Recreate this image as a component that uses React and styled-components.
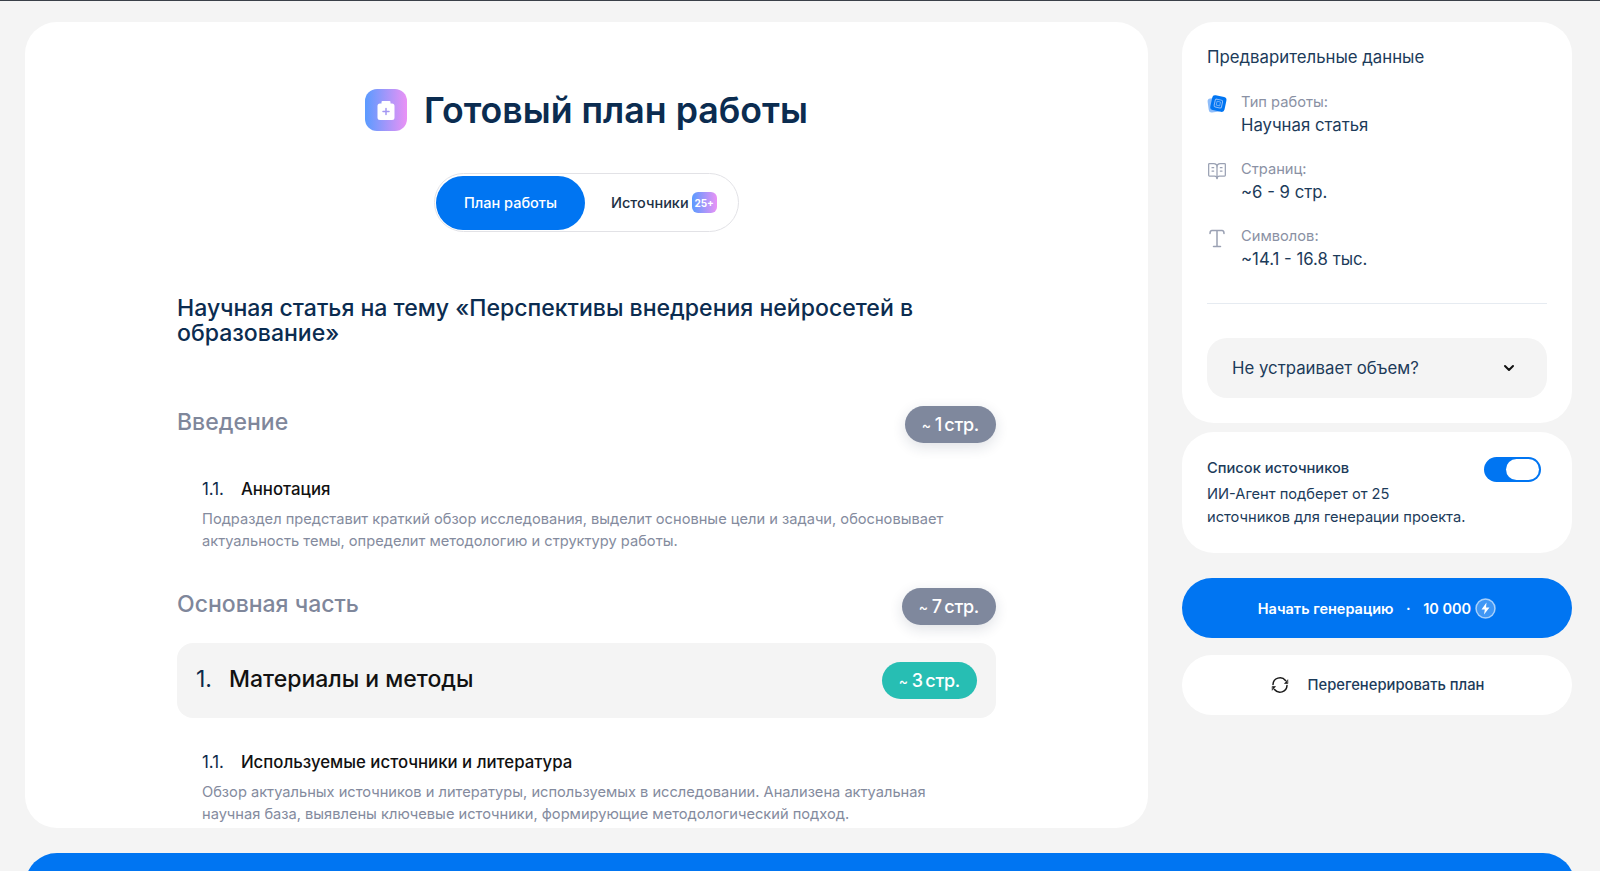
import styled, { createGlobalStyle } from "styled-components";
import { ChevronDown, BookOpenText } from "lucide-react";

const GlobalStyle = createGlobalStyle`
  html, body {
    margin: 0;
    height: 100%;
    overflow: hidden;
    background: #f4f4f4;
    font-family: "Inter", "Noto Sans", sans-serif;
  }
  * { box-sizing: border-box; }
`;

const Page = styled.div`
  height: 871px;
  border-top: 1px solid #3a4048;
  padding: 21px 25px 0;
  display: flex;
  flex-direction: column;
  overflow: hidden;
`;

const Columns = styled.div`
  display: grid;
  grid-template-columns: 1123px 390px;
  column-gap: 34px;
  align-items: start;
`;

const Main = styled.main`
  height: 806px;
  background: #fff;
  border-radius: 32px;
  overflow: hidden;
  padding: 67px 152px 0;
`;

const TitleRow = styled.div`
  display: flex;
  align-items: center;
  justify-content: center;
  gap: 17px;
`;

const TitleIcon = styled.div`
  width: 42px;
  height: 42px;
  border-radius: 12px;
  background: linear-gradient(90deg, #5a9bff, #ea92f5);
  display: flex;
  align-items: center;
  justify-content: center;
`;

const Title = styled.h1`
  margin: 0;
  font-size: 35.7px;
  line-height: 42px;
  font-weight: 600;
  color: #0b2c50;
`;

const Tabs = styled.div`
  width: 305px;
  height: 59px;
  margin: 42px auto 0;
  padding: 1px;
  border: 1px solid #e2e2e6;
  border-radius: 30px;
  display: flex;
  align-items: center;
`;

const ActiveTab = styled.div`
  width: 149px;
  height: 54px;
  border-radius: 27px;
  background: #0075f2;
  color: #fff;
  font-size: 14.5px;
  font-weight: 500;
  display: flex;
  align-items: center;
  justify-content: center;
`;

const Tab = styled.div`
  margin-left: 26px;
  color: #1d3145;
  font-size: 14.5px;
  font-weight: 500;
  display: flex;
  align-items: center;
  gap: 3px;
`;

const TabBadge = styled.span`
  width: 25px;
  height: 21px;
  border-radius: 6px;
  background: linear-gradient(90deg, #5a9bff, #ea92f5);
  color: #fff;
  font-size: 10px;
  font-weight: 700;
  display: flex;
  align-items: center;
  justify-content: center;
`;

const Heading = styled.h2`
  margin: 64px 0 0;
  font-size: 23.05px;
  line-height: 25px;
  font-weight: 500;
  color: #0b2c50;
`;

const SectionRow = styled.div`
  display: flex;
  align-items: center;
  justify-content: space-between;
  margin-top: ${(p) => p.$top}px;
`;

const SectionName = styled.div`
  font-size: 23px;
  line-height: 30px;
  padding-bottom: 5px;
  font-weight: 500;
  color: #7f879b;
`;

const Pill = styled.div`
  height: 37px;
  padding: 0 17px;
  border-radius: 19px;
  background: ${(p) => (p.$teal ? "#27beb3" : "#7f889d")};
  box-shadow: ${(p) => (p.$teal ? "none" : "0 4px 14px rgba(30, 40, 70, 0.14)")};
  color: #fff;
  font-size: 18px;
  font-weight: 500;
  letter-spacing: -0.3px;
  word-spacing: -2px;
  white-space: pre;
  display: flex;
  align-items: center;
`;

const Tilde = styled.span`
  font-size: 14px;
  margin-right: 4px;
`;

const SubItem = styled.div`
  padding-left: 25px;
  margin-top: ${(p) => p.$top}px;
`;

const SubTitle = styled.div`
  display: flex;
  gap: 17px;
  font-size: 16.8px;
  line-height: 24px;
  font-weight: 500;
  color: #111;
`;

const SubNum = styled.span`
  color: #0d2a4a;
  font-weight: 400;
`;

const SubText = styled.p`
  margin: 7px 0 0;
  font-size: 14.65px;
  line-height: 22px;
  color: #848b9e;
`;

const ChapterRow = styled.div`
  height: 75px;
  margin-top: 18px;
  padding: 0 19px;
  border-radius: 16px;
  background: #f4f4f4;
  display: flex;
  align-items: center;
  justify-content: space-between;
`;

const ChapterName = styled.div`
  display: flex;
  gap: 17px;
  padding-bottom: 4px;
  font-size: 23px;
  font-weight: 500;
  color: #111;
`;

const Side = styled.aside`
  display: flex;
  flex-direction: column;
`;

const Card = styled.section`
  background: #fff;
  border-radius: 32px;
  padding: ${(p) => p.$pad};
  margin-bottom: ${(p) => p.$mb}px;
`;

const CardTitle = styled.div`
  font-size: 16.8px;
  line-height: 24px;
  font-weight: 400;
  color: #1c3b5a;
  margin-bottom: 23px;
`;

const Info = styled.div`
  display: flex;
  gap: 14px;
  height: 67px;
`;

const InfoIcon = styled.div`
  width: 20px;
  height: 20px;
  margin-top: 2px;
  color: #9aa1b3;
  flex: none;
`;

const InfoLabel = styled.div`
  font-size: 14.7px;
  line-height: 20px;
  color: #8a91a4;
`;

const InfoValue = styled.div`
  font-size: 16.75px;
  line-height: 24px;
  margin-top: 1px;
  color: #1c3b5a;
`;

const Divider = styled.hr`
  margin: 10px 0 34px;
  border: 0;
  border-top: 1px solid #e6ebf1;
`;

const Select = styled.div`
  height: 60px;
  padding: 0 25px;
  border-radius: 20px;
  background: #f4f4f4;
  display: flex;
  align-items: center;
  justify-content: space-between;
  font-size: 16.8px;
  color: #1c3b5a;
`;

const SelectArrow = styled(ChevronDown)`
  margin-right: 5px;
`;

const ToggleHead = styled.div`
  display: flex;
  justify-content: space-between;
  align-items: flex-start;
  padding-right: 6px;
`;

const ToggleTitle = styled.div`
  font-size: 14.7px;
  line-height: 24px;
  font-weight: 500;
  color: #1c3b5a;
`;

const Toggle = styled.div`
  width: 57px;
  height: 25px;
  margin-top: 1px;
  border-radius: 13px;
  background: #0075f2;
  padding: 2px;
  display: flex;
  justify-content: flex-end;
`;

const Knob = styled.div`
  width: 33px;
  height: 21px;
  border-radius: 11px;
  background: #fff;
`;

const ToggleText = styled.p`
  margin: 1px 0 0;
  font-size: 14.65px;
  line-height: 23px;
  color: #1c3b5a;
`;

const Primary = styled.div`
  height: 60px;
  border-radius: 30px;
  background: #0075f2;
  color: #fff;
  font-size: 14.5px;
  font-weight: 600;
  display: flex;
  align-items: center;
  justify-content: center;
  margin-bottom: 17px;
`;

const Dot = styled.span`
  margin: 0 12.5px;
`;

const Amount = styled.span`
  margin-right: 4px;
`;

const Secondary = styled.div`
  height: 60px;
  border-radius: 30px;
  background: #fff;
  color: #1c3b5a;
  font-size: 14.75px;
  font-weight: 500;
  display: flex;
  align-items: center;
  justify-content: center;
  gap: 18px;
`;

const BottomBar = styled.div`
  height: 60px;
  margin-top: 25px;
  flex: none;
  border-radius: 32px 32px 0 0;
  background: #0075f2;
`;

function ClipboardIcon() {
  return (
    <svg width="18" height="21" viewBox="0 0 18 21">
      <path
        d="M5.500 1h7a1 1 0 0 1 1 1v1.500H15A2.500 2.500 0 0 1 17.500 6v11.500A2.500 2.500 0 0 1 15 20H3a2.500 2.500 0 0 1-2.500-2.500V6A2.500 2.500 0 0 1 3 3.500h1.500V2a1 1 0 0 1 1-1z"
        fill="#fff"
      />
      <path d="M9 8.500v6M6 11.500h6" stroke="#a397f2" strokeWidth="1.500" strokeLinecap="round" />
    </svg>
  );
}

function PaperIcon() {
  return (
    <svg width="20" height="20" viewBox="0 0 20 20">
      <rect x="1" y="4" width="13" height="14" rx="3" fill="#8fbdf9" transform="rotate(-8 8 10)" />
      <rect x="4" y="2" width="14.500" height="15" rx="3" fill="#0075f2" transform="rotate(12 11 10)" />
      <rect x="7.500" y="5.500" width="7.500" height="8" rx="1.500" fill="none" stroke="#8fbdf9" strokeWidth="1" transform="rotate(12 11 10)" />
      <rect x="9.500" y="7.500" width="3.500" height="4" fill="none" stroke="#8fbdf9" strokeWidth="0.700" transform="rotate(12 11 10)" />
    </svg>
  );
}

function SerifTIcon() {
  return (
    <svg width="20" height="20" viewBox="0 0 20 20" fill="none" stroke="currentColor" strokeWidth="1.500" strokeLinecap="round">
      <path d="M3 5.500C3 3.500 3.500 2.500 5 2.500h10c1.500 0 2 1 2 3M10 2.500V18.500M6.500 18.500h7" />
    </svg>
  );
}

function BoltIcon() {
  return (
    <svg width="21" height="21" viewBox="0 0 21 21">
      <circle cx="10.500" cy="10.500" r="9.500" fill="rgba(255,255,255,0.25)" stroke="rgba(255,255,255,0.6)" strokeWidth="1.500" />
      <path d="M11.500 4.500 6.500 11.500h3.300L9 16.500 14.500 9.500h-3.500z" fill="#fff" />
    </svg>
  );
}

function SyncIcon() {
  return (
    <svg width="20" height="20" viewBox="0 0 20 20" fill="none" stroke="#1a1a1a" strokeWidth="1.500" strokeLinecap="round">
      <path d="M3 9.500A7 7 0 0 1 15.500 5.500" />
      <path d="M17 10.500A7 7 0 0 1 4.500 14.500" />
      <path d="M17.500 8.500 14.500 8.500 17.500 5z" fill="#1a1a1a" strokeWidth="0.600" strokeLinejoin="round" />
      <path d="M2.500 11.500 5.500 11.500 2.500 15z" fill="#1a1a1a" strokeWidth="0.600" strokeLinejoin="round" />
    </svg>
  );
}

function Pages({ count, teal }) {
  return (
    <Pill $teal={teal}>
      <Tilde>~</Tilde> {count} стр.
    </Pill>
  );
}

export default function App() {
  return (
    <>
      <GlobalStyle />
      <Page>
        <Columns>
          <Main>
            <TitleRow>
              <TitleIcon>
                <ClipboardIcon />
              </TitleIcon>
              <Title>Готовый план работы</Title>
            </TitleRow>
            <Tabs>
              <ActiveTab>План работы</ActiveTab>
              <Tab>
                Источники <TabBadge>25+</TabBadge>
              </Tab>
            </Tabs>
            <Heading>Научная статья на тему «Перспективы внедрения нейросетей в образование»</Heading>

            <SectionRow $top={60}>
              <SectionName>Введение</SectionName>
              <Pages count={1} />
            </SectionRow>
            <SubItem $top={34}>
              <SubTitle>
                <SubNum>1.1.</SubNum> Аннотация
              </SubTitle>
              <SubText>
                Подраздел представит краткий обзор исследования, выделит основные цели и задачи, обосновывает
                <br />
                актуальность темы, определит методологию и структуру работы.
              </SubText>
            </SubItem>

            <SectionRow $top={36}>
              <SectionName>Основная часть</SectionName>
              <Pages count={7} />
            </SectionRow>
            <ChapterRow>
              <ChapterName>
                <SubNum>1.</SubNum> Материалы и методы
              </ChapterName>
              <Pages count={3} teal />
            </ChapterRow>
            <SubItem $top={32}>
              <SubTitle>
                <SubNum>1.1.</SubNum> Используемые источники и литература
              </SubTitle>
              <SubText>
                Обзор актуальных источников и литературы, используемых в исследовании. Анализена актуальная
                <br />
                научная база, выявлены ключевые источники, формирующие методологический подход.
              </SubText>
            </SubItem>
          </Main>

          <Side>
            <Card $pad="23px 25px 25px" $mb={9}>
              <CardTitle>Предварительные данные</CardTitle>
              <Info>
                <InfoIcon>
                  <PaperIcon />
                </InfoIcon>
                <div>
                  <InfoLabel>Тип работы:</InfoLabel>
                  <InfoValue>Научная статья</InfoValue>
                </div>
              </Info>
              <Info>
                <InfoIcon>
                  <BookOpenText size={20} strokeWidth={1.5} />
                </InfoIcon>
                <div>
                  <InfoLabel>Страниц:</InfoLabel>
                  <InfoValue>~6 - 9 стр.</InfoValue>
                </div>
              </Info>
              <Info>
                <InfoIcon>
                  <SerifTIcon />
                </InfoIcon>
                <div>
                  <InfoLabel>Символов:</InfoLabel>
                  <InfoValue>~14.1 - 16.8 тыс.</InfoValue>
                </div>
              </Info>
              <Divider />
              <Select>
                Не устраивает объем?
                <SelectArrow size={16} color="#111" strokeWidth={3} />
              </Select>
            </Card>

            <Card $pad="24px 25px 24px" $mb={25}>
              <ToggleHead>
                <ToggleTitle>Список источников</ToggleTitle>
                <Toggle>
                  <Knob />
                </Toggle>
              </ToggleHead>
              <ToggleText>
                ИИ-Агент подберет от 25
                <br />
                источников для генерации проекта.
              </ToggleText>
            </Card>

            <Primary>
              Начать генерацию
              <Dot>·</Dot>
              <Amount>10 000</Amount>
              <BoltIcon />
            </Primary>
            <Secondary>
              <SyncIcon />
              Перегенерировать план
            </Secondary>
          </Side>
        </Columns>
        <BottomBar />
      </Page>
    </>
  );
}
